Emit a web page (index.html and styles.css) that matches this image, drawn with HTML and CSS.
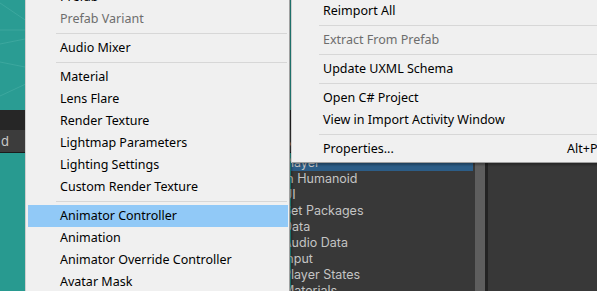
FILE: index.html
```html
<!DOCTYPE html>
<html>
<head>
<meta charset="utf-8">
<link rel="stylesheet" href="styles.css">
</head>
<body>
<div class="editor">
  <div class="scene">
    <div class="scene-view">
      <svg class="grid" width="291" height="110" viewBox="0 0 291 110">
        <line x1="0" y1="3" x2="40" y2="30" />
        <line x1="0" y1="44" x2="40" y2="36" />
        <line x1="0" y1="62" x2="40" y2="70" />
        <line x1="0" y1="96" x2="30" y2="82" />
        <line x1="0" y1="30" x2="40" y2="30" />
      </svg>
    </div>
    <div class="scene-toolbar"></div>
    <div class="scene-tab"><span>d</span></div>
    <div class="scene-view lower"></div>
  </div>
  <div class="project">
    <div class="tree">
      <div class="row">Prefabs</div>
      <div class="row selected">Player</div>
      <div class="row">In Humanoid</div>
      <div class="row">UI</div>
      <div class="row">Set Packages</div>
      <div class="row">Data</div>
      <div class="row">Audio Data</div>
      <div class="row">Input</div>
      <div class="row">Player States</div>
      <div class="row">Materials</div>
    </div>
    <div class="scrollbar"></div>
    <div class="split"></div>
    <div class="assets"></div>
  </div>
</div>

<div class="menu menu-create">
  <div class="item">Prefab</div>
  <div class="item disabled">Prefab Variant</div>
  <div class="sep"></div>
  <div class="item">Audio Mixer</div>
  <div class="sep"></div>
  <div class="item">Material</div>
  <div class="item">Lens Flare</div>
  <div class="item">Render Texture</div>
  <div class="item">Lightmap Parameters</div>
  <div class="item">Lighting Settings</div>
  <div class="item">Custom Render Texture</div>
  <div class="sep"></div>
  <div class="item active">Animator Controller</div>
  <div class="item">Animation</div>
  <div class="item">Animator Override Controller</div>
  <div class="item">Avatar Mask</div>
</div>

<div class="menu menu-assets">
  <div class="item">Reimport</div>
  <div class="sep"></div>
  <div class="item">Reimport All</div>
  <div class="sep"></div>
  <div class="item disabled">Extract From Prefab</div>
  <div class="sep"></div>
  <div class="item">Update UXML Schema</div>
  <div class="sep"></div>
  <div class="item">Open C# Project</div>
  <div class="item">View in Import Activity Window</div>
  <div class="sep"></div>
  <div class="item"><span>Properties...</span><span class="key">Alt+P</span></div>
</div>
</body>
</html>
```

FILE: styles.css
```css
html, body {
  margin: 0;
  padding: 0;
  width: 597px;
  height: 291px;
  overflow: hidden;
}

body {
  position: relative;
  font-family: "Noto Sans", "Open Sans", sans-serif;
}

.editor {
  display: flex;
  width: 597px;
  height: 291px;
}

.scene {
  width: 291px;
  flex: none;
  display: flex;
  flex-direction: column;
}

.scene-view {
  height: 110px;
  background: #2a9c93;
}

.scene-view.lower {
  flex: 1;
  height: auto;
  background: #289a90;
}

.grid line {
  stroke: #4fb2a9;
  stroke-width: 1;
  opacity: 0.5;
}

.scene-toolbar {
  height: 20px;
  background: #262626;
}

.scene-tab {
  height: 22px;
  background: #3c3c3c;
  border-bottom: 1px solid #1b1b1b;
  color: #c8c8c8;
  font-family: Inter, "Noto Sans", sans-serif;
  font-size: 13px;
  line-height: 22px;
  padding-left: 1px;
}

.project {
  flex: 1;
  display: flex;
  background: #383838;
}

.tree {
  width: 184px;
  flex: none;
  padding-top: 139px;
  font-family: Inter, "Noto Sans", sans-serif;
  font-size: 12.5px;
  color: #c4c4c4;
}

.row {
  height: 16px;
  line-height: 16px;
  margin-right: 2px;
  text-indent: -8px;
  white-space: nowrap;
}

.row.selected {
  background: #2c5d87;
}

.scrollbar {
  width: 10px;
  flex: none;
  background: #5e5e5e;
}

.split {
  width: 3px;
  flex: none;
  background: #232323;
}

.assets {
  flex: 1;
  background: #383838;
}

/* menus */
.menu {
  position: absolute;
  background: #f0f0f0;
  border: 1px solid #cfcfcf;
  padding: 2px 0;
  font-size: 12.5px;
  color: #000;
  box-shadow: 2px 2px 2px rgba(0, 0, 0, 0.3);
}

.menu-create {
  left: 25px;
  top: -17px;
  width: 263px;
  border-right-color: #a0a0a0;
  --text-pad: 32px;
  --sep-left: 30px;
}

.menu-assets {
  left: 291px;
  top: -32px;
  width: 340px;
  border-bottom-color: #a0a0a0;
  --text-pad: 29px;
  --sep-left: 27px;
}

.item {
  height: 22px;
  line-height: 22px;
  margin: 0 1px 0 2px;
  padding-left: var(--text-pad);
  white-space: nowrap;
  display: grid;
  grid-template-columns: 244px auto;
}

.item.disabled {
  color: #6d6d6d;
}

.item.active {
  background: #91c9f7;
}

.sep {
  height: 1px;
  margin: 3px 2px 3px var(--sep-left);
  background: #d7d7d7;
}

.key {
  color: #000;
}
```
